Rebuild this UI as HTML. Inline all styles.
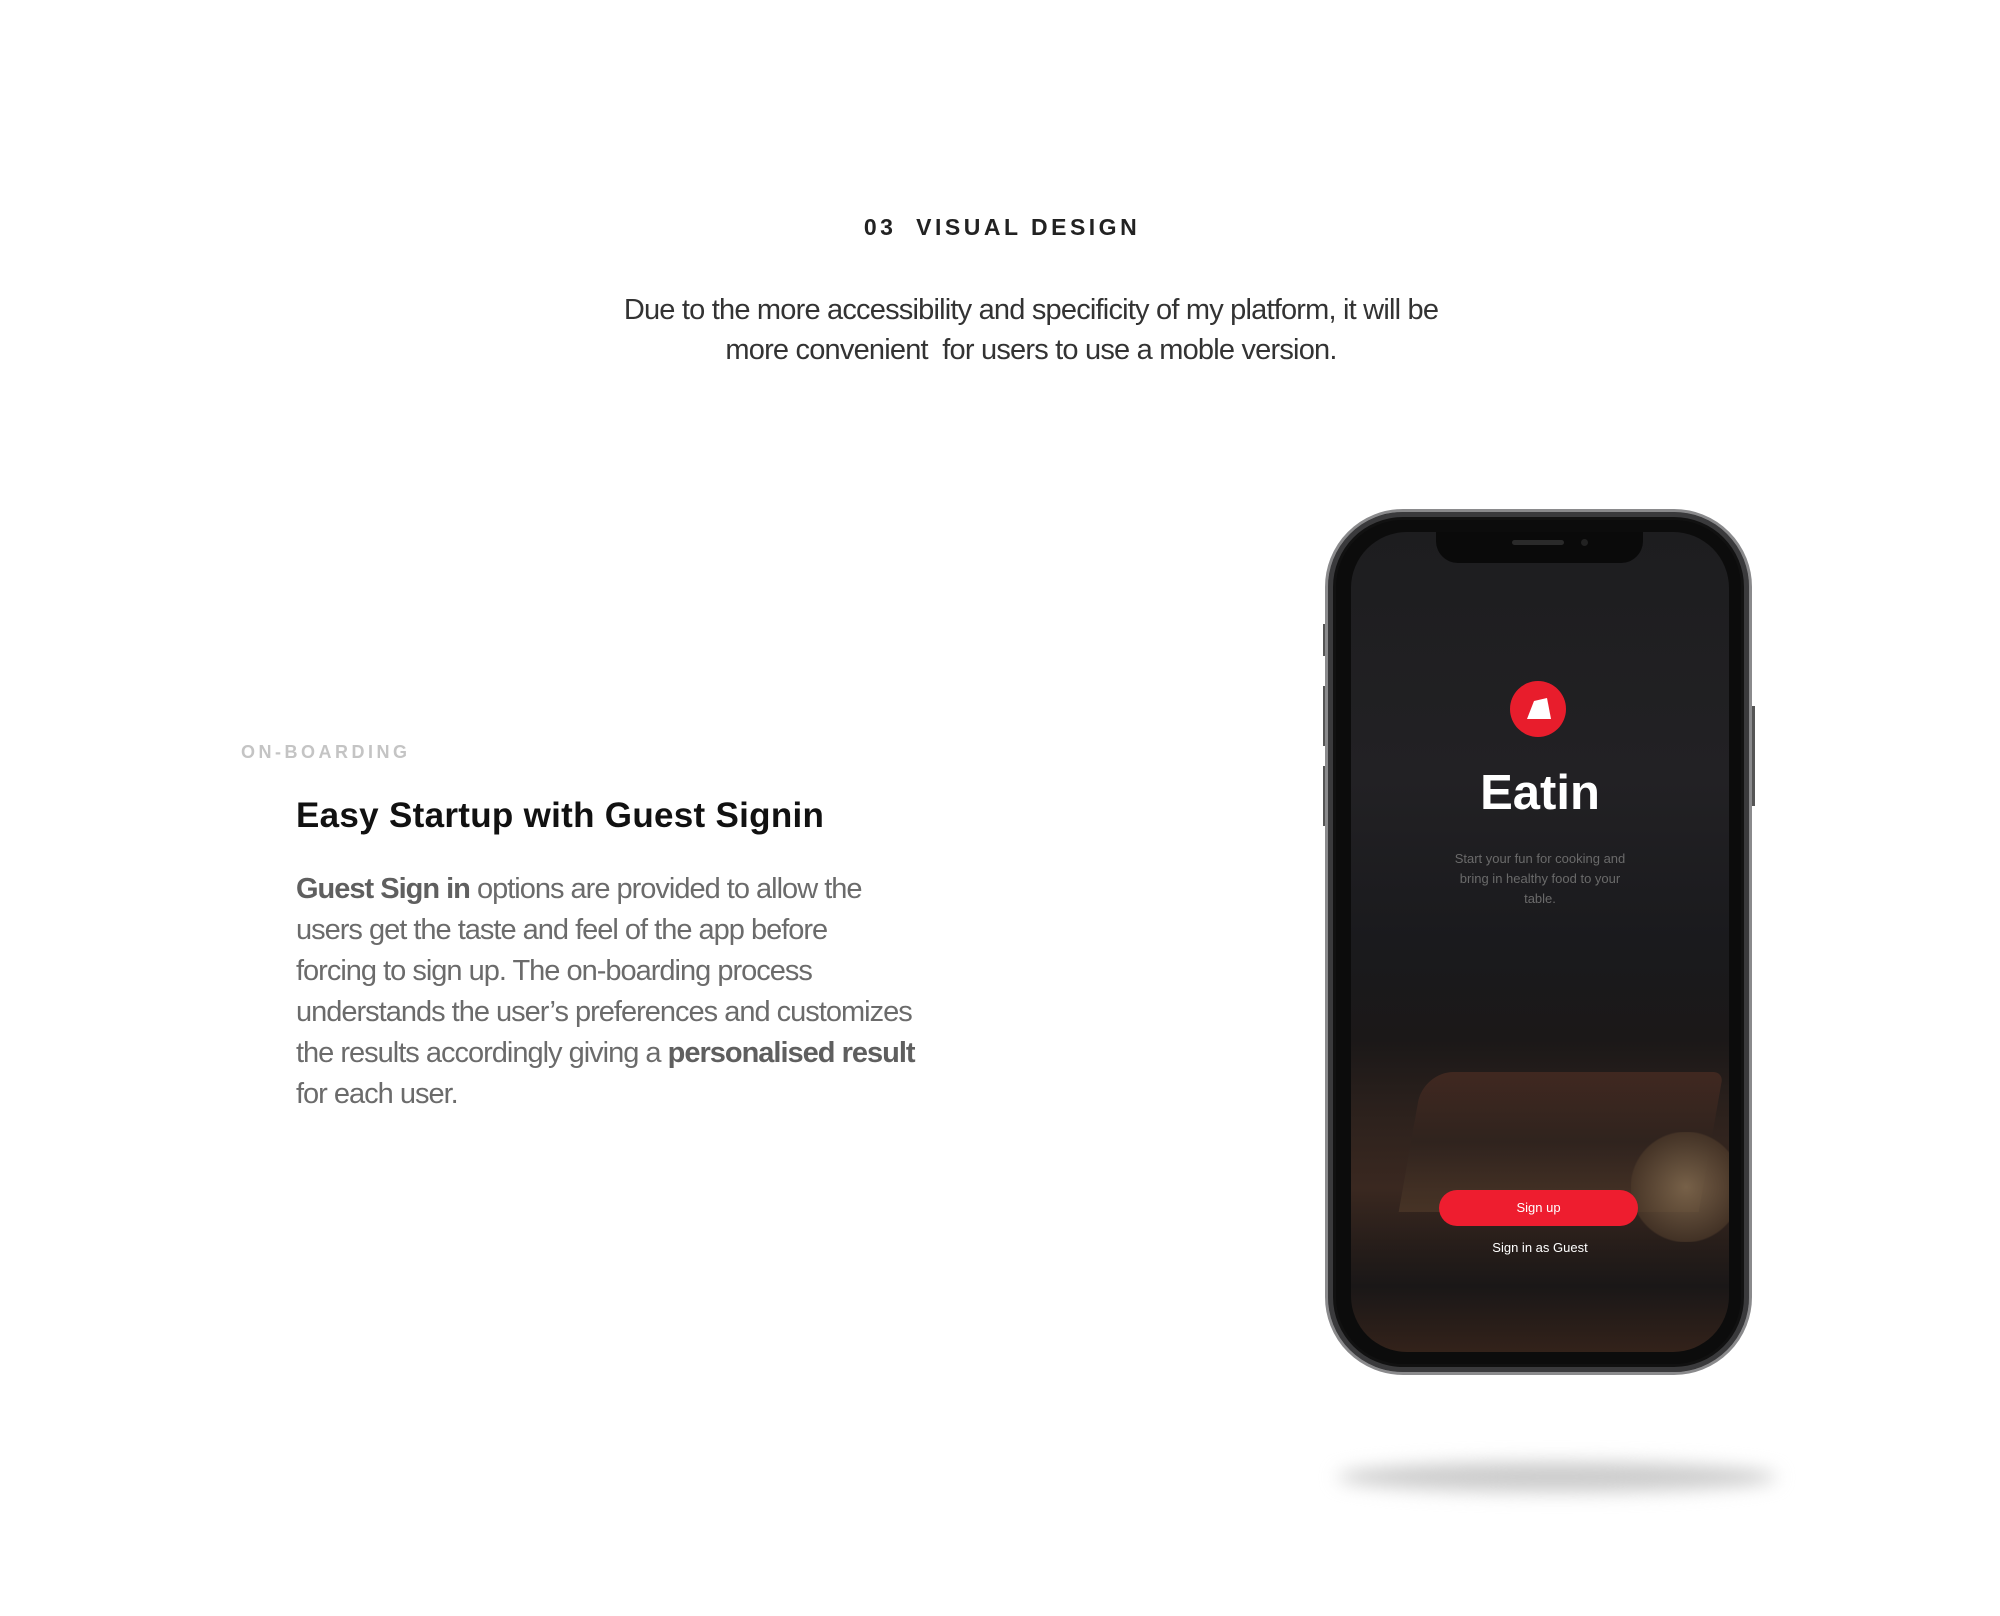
<!DOCTYPE html>
<html><head><meta charset="utf-8"><style>
*{margin:0;padding:0;box-sizing:border-box}
body{width:2000px;height:1616px;background:#fff;position:relative;overflow:hidden;font-family:"Liberation Sans",sans-serif}
.abs{position:absolute}
.h{left:0;width:2004px;top:214px;text-align:center;font-size:23px;font-weight:bold;letter-spacing:3.5px;color:#222}
.intro{left:0;width:2062px;top:290px;text-align:center;font-size:29px;line-height:40px;color:#333;letter-spacing:-0.8px}
.ob{left:241px;top:742px;font-size:18px;font-weight:bold;letter-spacing:3.5px;color:#c4c4c4}
.t{left:296px;top:796px;font-size:35px;font-weight:bold;color:#111;letter-spacing:0.3px}
.b{left:296px;top:869px;white-space:nowrap;font-size:29px;line-height:41px;color:#6b6b6b;letter-spacing:-1px}
.b strong{color:#5f5f5f}
.phone{left:1325px;top:509px;width:427px;height:866px;border-radius:78px;background:#0c0c0c;border:3px solid #8a8a8c;box-shadow:inset 0 0 0 5px #3a3a3c,inset 0 0 0 8px #111}
.screen{left:1351px;top:532px;width:378px;height:820px;border-radius:56px;overflow:hidden;
background:linear-gradient(180deg,#1d1d1f 0%,#222124 30%,#1a1a1d 50%,#1b1818 62%,#2e221d 72%,#3a2820 80%,#241c19 88%,#1a1717 92%,#33221a 100%)}
.cake{left:60px;top:540px;width:300px;height:140px;background:linear-gradient(180deg,#4a2c22,#2f231e 50%,#4d3828);border-radius:30px 10px 0 0;transform:skewX(-10deg);opacity:.75}
.crumb{left:280px;top:600px;width:110px;height:110px;background:radial-gradient(#8e7658,#4d3a2a 70%,transparent 72%);opacity:.7}
.notch{left:1436px;top:532px;width:207px;height:31px;background:#0a0a0a;border-radius:0 0 22px 22px}
.logo{left:1510px;top:681px;width:56px;height:56px;border-radius:50%;background:#e81d2c}
.eatin{left:1351px;width:378px;top:765px;text-align:center;color:#fff;font-size:49px;font-weight:bold}
.sub{left:1351px;width:378px;top:849px;text-align:center;color:#6a6a6a;font-size:13px;line-height:20px}
.btn{left:1439px;top:1190px;width:199px;height:36px;border-radius:18px;background:#ee1d2f;color:#fff;font-size:13px;text-align:center;line-height:36px}
.guest{left:1351px;width:378px;top:1240px;text-align:center;color:#fff;font-size:13px}
.shadow{left:1337px;top:1462px;width:440px;height:30px;border-radius:50%;background:#ccc;filter:blur(9px)}
.btnside{background:#555;width:3px}
</style></head><body>
<div class="abs h">03&nbsp; VISUAL DESIGN</div>
<div class="abs intro">Due to the more accessibility and specificity of my platform, it will be<br>more convenient&nbsp; for users to use a moble version.</div>
<div class="abs ob">ON-BOARDING</div>
<div class="abs t">Easy Startup with Guest Signin</div>
<div class="abs b"><strong>Guest Sign in</strong> options are provided to allow the<br>users get the taste and feel of the app before<br>forcing to sign up. The on-boarding process<br>understands the user’s preferences and customizes<br>the results accordingly giving a <strong>personalised result</strong><br>for each user.</div>
<div class="abs shadow"></div>
<div class="abs btnside" style="left:1323px;top:624px;height:32px"></div>
<div class="abs btnside" style="left:1323px;top:686px;height:60px"></div>
<div class="abs btnside" style="left:1323px;top:766px;height:60px"></div>
<div class="abs btnside" style="left:1752px;top:706px;height:100px"></div>
<div class="abs phone"></div>
<div class="abs screen"><div class="abs cake"></div><div class="abs crumb"></div></div>
<div class="abs notch"></div>
<div class="abs" style="left:1512px;top:540px;width:52px;height:5px;border-radius:3px;background:#2a2a2a"></div>
<div class="abs" style="left:1581px;top:539px;width:7px;height:7px;border-radius:50%;background:#222"></div>
<div class="abs logo"><svg width="56" height="56" viewBox="0 0 56 56"><path d="M17 38 L24 20 L37 17 L41 38 Z" fill="#fff"/></svg></div>
<div class="abs eatin">Eatin</div>
<div class="abs sub">Start your fun for cooking and<br>bring in healthy food to your<br>table.</div>
<div class="abs btn">Sign up</div>
<div class="abs guest">Sign in as Guest</div>
</body></html>
